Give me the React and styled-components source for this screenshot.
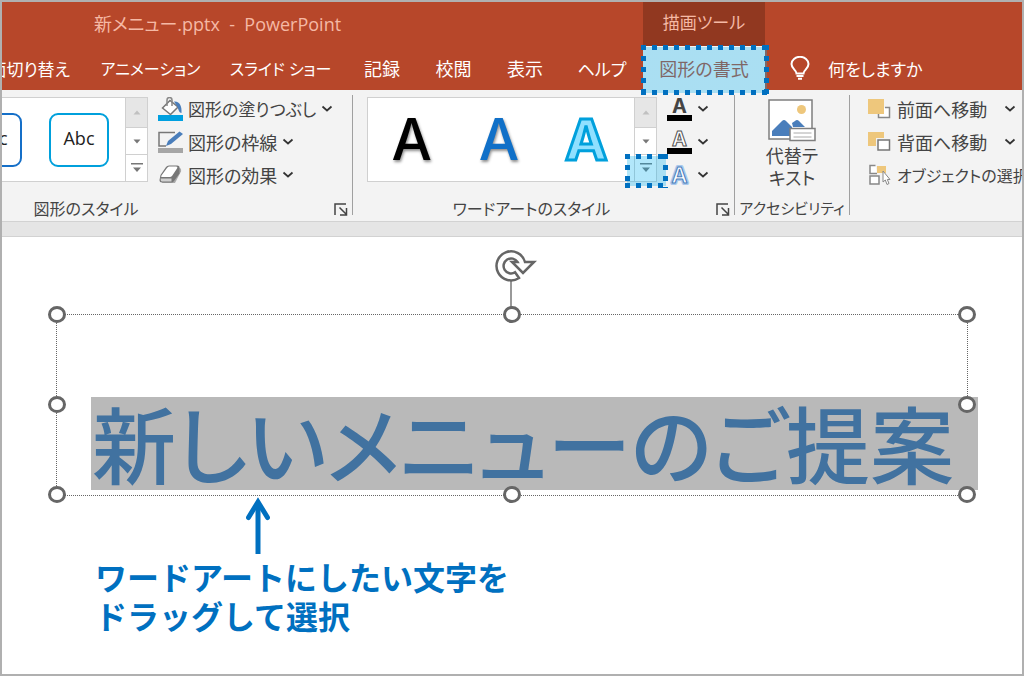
import React from 'react';
import styled, { createGlobalStyle, css } from 'styled-components';

const GlobalStyle = createGlobalStyle`
  * {
    box-sizing: border-box;
  }

  body {
    margin: 0;
    background-color: white;
    font-family: 'Open Sans', 'Noto Sans CJK JP', sans-serif;
    font-size: 18px;
    color: #444444;
  }

  button {
    margin: 0;
    padding: 0;
    border: none;
    background: none;
    font: inherit;
    color: inherit;
    cursor: pointer;
  }
`;

const Frame = styled.div`
  display: flex;
  flex-direction: column;
  min-height: 100vh;
  border: 2px solid #b0b0b0;
  overflow: hidden;
`;

/* Blue marching squares over a translucent fill */
const highlight = css`
  content: '';
  position: absolute;
  z-index: 2;
  pointer-events: none;
  background:
    repeating-linear-gradient(90deg, #0070c0 0 5px, transparent 5px 11px) top / 100% 5px no-repeat,
    repeating-linear-gradient(90deg, #0070c0 0 5px, transparent 5px 11px) bottom / 100% 5px no-repeat,
    repeating-linear-gradient(#0070c0 0 5px, transparent 5px 11px) left / 5px 100% no-repeat,
    repeating-linear-gradient(#0070c0 0 5px, transparent 5px 11px) right / 5px 100% no-repeat,
    linear-gradient(rgba(0, 176, 240, 0.3), rgba(0, 176, 240, 0.3)) center / calc(100% - 4px) calc(100% - 4px) no-repeat;
`;

const Header = styled.header`
  background-color: #b7472a;
  color: white;
  font-feature-settings: 'palt';
  white-space: nowrap;
`;

const TitleBar = styled.div`
  display: flex;
  height: 44px;
  line-height: 44px;
  color: #f5b9a5;
`;

const FileName = styled.div`
  flex: 0 0 641px;
  padding-left: 92px;
  white-space: pre;
`;

const ContextTitle = styled.div`
  flex: 0 0 122px;
  text-align: center;
  background-color: #913820;
  font-size: 17px;
  line-height: 42px;
`;

const TabBar = styled.nav`
  display: flex;
  height: 44px;
`;

const Tab = styled.button`
  flex: 0 0 ${(props) => props.$width}px;
  display: flex;
  justify-content: ${(props) => (props.$cut ? 'flex-end' : 'center')};
  align-items: center;
  padding-right: ${(props) => (props.$cut ? 16 : 0)}px;
  overflow: ${(props) => (props.$cut ? 'hidden' : 'visible')};
  font-size: ${(props) => props.$size || 18}px;
`;

const ActiveTab = styled(Tab)`
  position: relative;
  background-color: #f3f3f3;
  color: #b7472a;

  &::after {
    ${highlight}
    inset: -1px -4px -5px -2px;
  }
`;

const TellMe = styled.button`
  display: flex;
  align-items: center;
  gap: 18px;
  margin-left: 25px;
  font-size: 17px;
`;

const Ribbon = styled.div`
  display: flex;
  height: 131px;
  background-color: #f3f3f3;
  font-feature-settings: 'palt';
  white-space: nowrap;
`;

const Group = styled.section`
  flex: ${(props) => (props.$width ? `0 0 ${props.$width}px` : '1 0 0')};
  min-width: 0;
  display: flex;
  flex-direction: column;
  padding-top: 2px;
`;

const Divider = styled.div`
  flex: 0 0 1px;
  margin: 5px 0 6px;
  background-color: #a0a0a0;
`;

const GroupBody = styled.div`
  display: flex;
  height: 101px;
  padding-left: ${(props) => props.$indent || 0}px;
`;

const GroupFooter = styled.div`
  display: flex;
  align-items: center;
  height: 28px;
  padding: 4px 4px 0 0;
`;

const GroupLabel = styled.h2`
  flex: 1;
  margin: 0;
  padding: 0 ${(props) => props.$shift || 0}px 3px 4px;
  font-size: ${(props) => props.$size || 16}px;
  font-weight: 400;
  text-align: center;
`;

const Gallery = styled.div`
  display: flex;
  height: 85px;
  margin-top: 5px;
  border: 1px solid #d0d0d0;
  border-left-width: ${(props) => (props.$cut ? 0 : 1)}px;
  background-color: white;
`;

const Samples = styled.div`
  flex: 0 0 ${(props) => props.$width}px;
  display: flex;
  align-items: center;
  justify-content: ${(props) => (props.$end ? 'flex-end' : 'space-around')};
  gap: ${(props) => (props.$end ? 27 : 0)}px;
  padding-right: ${(props) => (props.$end ? 16 : 4)}px;
  overflow: hidden;
`;

const ShapeSample = styled.button`
  flex: 0 0 60px;
  height: 54px;
  padding-bottom: 4px;
  border: 2px solid ${(props) => props.$color};
  border-radius: 9px;
  color: #222222;
`;

const LetterSample = styled.button`
  width: 87px;
  font-family: Inter, sans-serif;
  font-size: 57px;
  font-weight: 500;
  line-height: 80px;
  color: ${(props) => props.$color};
  text-shadow: 1px 2px 3px rgba(0, 0, 0, 0.45);
`;

const OutlineLetter = styled(LetterSample)`
  font-weight: 700;
  text-shadow: none;
  -webkit-text-stroke: 3px #00a0dc;
`;

const Scroller = styled.div`
  flex: 0 0 22px;
  display: flex;
  flex-direction: column;
  border-left: 1px solid #d0d0d0;
`;

const ScrollButton = styled.button`
  position: relative;
  flex: 1;
  display: flex;
  align-items: center;
  justify-content: center;
  background-color: white;
  color: #777777;

  &:disabled {
    flex: 0 0 29px;
    background-color: #e6e6e6;
    color: #c0c0c0;
  }

  & + & {
    border-top: 1px solid #d0d0d0;
  }

  &::after {
    ${(props) => props.$marked && highlight}
    inset: -1px -12px -7px -10px;
  }
`;

const Commands = styled.div`
  flex: 1;
  min-width: 0;
  display: flex;
  flex-direction: column;
  padding-left: ${(props) => props.$indent}px;
`;

const Command = styled.button`
  flex: 0 0 33px;
  display: flex;
  align-items: center;
  gap: 5px;
  font-size: ${(props) => props.$size || 18}px;
  text-align: left;

  & > svg {
    flex: none;
  }
`;

const WideLabel = styled.span`
  flex: 0 0 102px;
`;

const BigCommand = styled.button`
  flex: 1;
  display: flex;
  flex-direction: column;
  align-items: center;
  gap: 3px;
  padding-top: 7px;
  line-height: 22px;
`;

const Ruler = styled.div`
  height: 16px;
  background-color: #e5e5e5;
  border: 1px solid #d2d2d2;
  border-width: 1px 0;
`;

const Slide = styled.main`
  flex: 1;
  padding: 77px 54px 0;
`;

const TextBox = styled.div`
  position: relative;
  height: 182px;
  padding: 82px 0 0 34px;
  border: 1px dotted #666666;
`;

const SlideTitle = styled.h1`
  width: calc(100% + 11px);
  margin: 0;
  padding: 0 0 4px 1px;
  background-color: #b9b9b9;
  color: #4172a0;
  font-family: 'Noto Sans CJK JP', sans-serif;
  font-size: 84px;
  font-weight: 500;
  font-feature-settings: 'palt';
  line-height: 89px;
  white-space: nowrap;
`;

const Handle = styled.span`
  position: absolute;
  left: ${(props) => props.$x};
  top: ${(props) => props.$y};
  width: 18px;
  height: 17px;
  margin: -9px 0 0 -9px;
  border: 3px solid #666666;
  border-radius: 50%;
  background-color: white;
`;

const Rotator = styled.svg`
  position: absolute;
  left: 50%;
  top: -68px;
  margin-left: -19px;
`;

const Note = styled.div`
  padding: 1px 0 0 39px;
  color: #0070c0;
`;

const NoteArrow = styled.svg`
  display: block;
  margin-left: 151px;
`;

const NoteText = styled.p`
  margin: 3px 0 0;
  font-family: 'Noto Sans CJK JP', sans-serif;
  font-size: 32px;
  font-weight: 700;
  line-height: 39px;
`;

const ChevronIcon = () => (
  <svg width="12" height="8" viewBox="0 0 12 8" fill="none" stroke="#333" strokeWidth="1.700">
    <path d="M1.500 1.500 6 5.500l4.500-4" />
  </svg>
);

const BulbIcon = () => (
  <svg width="20" height="24" viewBox="0 0 20 24" fill="none" stroke="white" strokeWidth="2">
    <path d="M6.500 17.500c0-3.500-5-4.500-5-9.500a8.500 7.200 0 0 1 17 0c0 5-5 6-5 9.500z" />
    <path d="M6.500 20h7M8 22.800h4" />
  </svg>
);

const ArrowUp = () => (
  <svg width="8" height="5" viewBox="0 0 8 5" fill="currentColor">
    <path d="M0.500 4.500 4 0.500l3.500 4z" />
  </svg>
);

const ArrowDown = () => (
  <svg width="8" height="5" viewBox="0 0 8 5" fill="currentColor">
    <path d="M0.500 0.500h7L4 4.500z" />
  </svg>
);

const ArrowMore = () => (
  <svg width="12" height="10" viewBox="0 0 12 10" fill="currentColor">
    <path d="M0 0h12v1.500H0zM2 4.500h8L6 9z" />
  </svg>
);

const LauncherIcon = () => (
  <svg width="14" height="13" viewBox="0 0 14 13" fill="none" stroke="#444" strokeWidth="1.500">
    <path d="M1 12V1h11M5.500 4.500l6.500 6.500M12.500 5v7H6" />
  </svg>
);

const FillIcon = () => (
  <svg width="25" height="24" viewBox="0 0 25 24" fill="none">
    <path d="M0 18h25v6H0z" fill="#00a0e0" />
    <path d="M4.500 11 12 3.500l8 6.500-7.500 7.500z" fill="white" stroke="#777" strokeWidth="1.500" />
    <path d="M9 9V3a2.500 2.500 0 0 1 5 0v6" stroke="#888" strokeWidth="1.500" />
    <path d="M16 4.500c6-.5 8 5 7.500 11.500-2 0-3-3-4-6z" fill="#4a7ebb" />
  </svg>
);

const OutlineIcon = () => (
  <svg width="25" height="24" viewBox="0 0 25 24" fill="none">
    <path d="M0 18h25v5H0z" fill="#a6a6a6" />
    <path d="M17 2.500H1V16h7" stroke="#777" strokeWidth="1.500" />
    <path d="m8 16 2-5L21.500 1.500 25 4 13 14z" fill="#4a7ebb" />
  </svg>
);

const EffectIcon = () => (
  <svg width="25" height="22" viewBox="0 0 25 22" strokeLinejoin="round">
    <path d="M9 4h12.500q2 0 1.500 3.500l-6 11.500H4z" fill="#aaa" />
    <path d="m2.500 11 5.500-8q1-1.500 3-1.500h8q3 0 2.500 3v5L16 17q-1 1.500-3 1.500H4q-2.500 0-2.500-2.500z" fill="#777" />
    <path d="m3.500 11.500 5.500-7.500q1-1.500 2-1.500h7q2 0 1 2l-5 7.500q-1 1-2 1H4.500q-2 0-1-1.500z" fill="white" />
    <path d="M2.500 14.500h11v3H4q-1.500-.5-1.500-3z" fill="#d0d0d0" />
  </svg>
);

const glyph = {
  fontFamily: 'Inter, sans-serif',
  textAnchor: 'middle',
};

const TextFillIcon = () => (
  <svg width="25" height="26" viewBox="0 0 25 26">
    <text x="12.500" y="17" fontSize="20" fontWeight="700" fill="#444" {...glyph}>A</text>
    <path d="M0 19h25v6H0z" />
  </svg>
);

const TextOutlineIcon = () => (
  <svg width="25" height="26" viewBox="0 0 25 26">
    <text x="12.500" y="17" fontSize="20" fontWeight="700" fill="white" stroke="#555" {...glyph}>A</text>
    <path d="M0 19h25v6H0z" />
  </svg>
);

const TextEffectIcon = () => (
  <svg width="25" height="26" viewBox="0 0 25 26">
    <g strokeLinejoin="round" {...glyph}>
      <text x="12.500" y="21" fontSize="22" fontWeight="600" fill="none" stroke="#a9c8ec" strokeWidth="4">A</text>
      <text x="12.500" y="21" fontSize="22" fontWeight="600" fill="white" stroke="#4a7ebb" strokeWidth="1">A</text>
    </g>
  </svg>
);

const AltTextIcon = () => (
  <svg width="48" height="43" viewBox="0 0 48 43" fill="white">
    <path d="M1 1h43v39H1z" stroke="#7f7f7f" strokeWidth="1.500" />
    <circle cx="33.500" cy="10.500" r="4.500" fill="#eec77c" />
    <path d="M4 37v-5l10-10q2-2 4 0l4 4 2 2v9z" fill="#4a7ebb" />
    <path d="m24 24 3-2q2-2 4 0l6 6H25z" fill="#4a7ebb" />
    <path d="M22 29.500h25v12H22z" stroke="#7f7f7f" strokeWidth="1.500" />
    <path d="M25.500 34h18M25.500 38h18" stroke="#aaa" />
  </svg>
);

const ForwardIcon = () => (
  <svg width="24" height="22" viewBox="0 0 24 22" fill="none">
    <path d="M17 9.500h4.500v10h-11V16" fill="white" stroke="#888" strokeWidth="1.500" />
    <path d="M0 1h16v15H0z" fill="#eec77c" />
  </svg>
);

const BackwardIcon = () => (
  <svg width="24" height="22" viewBox="0 0 24 22">
    <path d="M0 1h16v14H0z" fill="#eec77c" />
    <path d="M8 7h15v13H8z" fill="#f3f3f3" />
    <path d="M10 9h11.500v10H10z" fill="white" stroke="#777" strokeWidth="1.500" />
  </svg>
);

const SelectionIcon = () => (
  <svg width="24" height="22" viewBox="0 0 24 22" fill="white" stroke="#888" strokeWidth="1.500">
    <path d="M9 2h9v7H9z" fill="#eec77c" stroke="none" />
    <path d="M7.500 1.500H2v8h7M2 12h9v8H2z" />
    <path d="M15 7v11l2.300-2 1.700 4.500 2-1-1.700-4H22z" strokeWidth="1" />
  </svg>
);

const tabs = [
  { label: '画面切り替え', width: 84, size: 17, cut: true },
  { label: 'アニメーション', width: 129, size: 16 },
  { label: 'スライド ショー', width: 131, size: 16 },
  { label: '記録', width: 72 },
  { label: '校閲', width: 71 },
  { label: '表示', width: 72 },
  { label: 'ヘルプ', width: 82, size: 17 },
];

const handles = [
  ['0%', '0%'],
  ['50%', '0%'],
  ['100%', '0%'],
  ['0%', '50%'],
  ['100%', '50%'],
  ['0%', '100%'],
  ['50%', '100%'],
  ['100%', '100%'],
];

function GalleryScroller({ marked }) {
  return (
    <Scroller>
      <ScrollButton disabled aria-label="上へ">
        <ArrowUp />
      </ScrollButton>
      <ScrollButton aria-label="下へ">
        <ArrowDown />
      </ScrollButton>
      <ScrollButton aria-label="その他" $marked={marked}>
        <ArrowMore />
      </ScrollButton>
    </Scroller>
  );
}

function App() {
  return (
    <>
      <GlobalStyle />
      <Frame>
        <Header>
          <TitleBar>
            <FileName>{'新メニュー.pptx  -  PowerPoint'}</FileName>
            <ContextTitle>描画ツール</ContextTitle>
          </TitleBar>
          <TabBar>
            {tabs.map((tab) => (
              <Tab key={tab.label} $width={tab.width} $size={tab.size} $cut={tab.cut}>
                {tab.label}
              </Tab>
            ))}
            <ActiveTab $width={122}>図形の書式</ActiveTab>
            <TellMe>
              <BulbIcon />
              何をしますか
            </TellMe>
          </TabBar>
        </Header>

        <Ribbon>
          <Group $width={350}>
            <GroupBody>
              <Gallery $cut>
                <Samples $width={123} $end>
                  <ShapeSample $color="#156fc8">Abc</ShapeSample>
                  <ShapeSample $color="#00a0dc">Abc</ShapeSample>
                </Samples>
                <GalleryScroller />
              </Gallery>
              <Commands $indent={10}>
                <Command $size={17}>
                  <FillIcon />
                  図形の塗りつぶし
                  <ChevronIcon />
                </Command>
                <Command>
                  <OutlineIcon />
                  図形の枠線
                  <ChevronIcon />
                </Command>
                <Command>
                  <EffectIcon />
                  図形の効果
                  <ChevronIcon />
                </Command>
              </Commands>
            </GroupBody>
            <GroupFooter>
              <GroupLabel $shift={168}>図形のスタイル</GroupLabel>
              <button aria-label="図形の書式設定">
                <LauncherIcon />
              </button>
            </GroupFooter>
          </Group>
          <Divider />
          <Group $width={381}>
            <GroupBody $indent={14}>
              <Gallery>
                <Samples $width={266}>
                  <LetterSample $color="black">A</LetterSample>
                  <LetterSample $color="#1070c8">A</LetterSample>
                  <OutlineLetter $color="#8fe0ff">A</OutlineLetter>
                </Samples>
                <GalleryScroller marked />
              </Gallery>
              <Commands $indent={10}>
                <Command aria-label="文字の塗りつぶし">
                  <TextFillIcon />
                  <ChevronIcon />
                </Command>
                <Command aria-label="文字の輪郭">
                  <TextOutlineIcon />
                  <ChevronIcon />
                </Command>
                <Command aria-label="文字の効果">
                  <TextEffectIcon />
                  <ChevronIcon />
                </Command>
              </Commands>
            </GroupBody>
            <GroupFooter>
              <GroupLabel $shift={10}>ワードアートのスタイル</GroupLabel>
              <button aria-label="テキストの書式設定">
                <LauncherIcon />
              </button>
            </GroupFooter>
          </Group>
          <Divider />
          <Group $width={114}>
            <GroupBody>
              <BigCommand>
                <AltTextIcon />
                <span>
                  代替テ
                  <br />
                  キスト
                </span>
              </BigCommand>
            </GroupBody>
            <GroupFooter>
              <GroupLabel $size={15}>アクセシビリティ</GroupLabel>
            </GroupFooter>
          </Group>
          <Divider />
          <Group>
            <GroupBody>
              <Commands $indent={18}>
                <Command>
                  <ForwardIcon />
                  <WideLabel>前面へ移動</WideLabel>
                  <ChevronIcon />
                </Command>
                <Command>
                  <BackwardIcon />
                  <WideLabel>背面へ移動</WideLabel>
                  <ChevronIcon />
                </Command>
                <Command $size={16}>
                  <SelectionIcon />
                  オブジェクトの選択
                </Command>
              </Commands>
            </GroupBody>
          </Group>
        </Ribbon>
        <Ruler />

        <Slide>
          <TextBox>
            <SlideTitle>新しいメニューのご提案</SlideTitle>
            <Rotator width="44" height="68" viewBox="0 0 44 68" fill="none">
              <path d="M18 33v35" stroke="#777" strokeWidth="1.500" />
              <path
                d="M26 31A14.500 14.500 0 1 1 32 15H41L30 26 19 15H24.500A7.500 7.500 0 1 0 22 25.300z"
                fill="white"
                stroke="#666"
                strokeWidth="2.500"
              />
            </Rotator>
            {handles.map(([x, y]) => (
              <Handle key={x + y} $x={x} $y={y} />
            ))}
          </TextBox>
          <Note>
            <NoteArrow width="24" height="57" viewBox="0 0 24 57" fill="none" stroke="currentColor" strokeWidth="5">
              <path d="M12 5v52" />
              <path d="M2.500 20.500 12 5l9.500 15.500" strokeLinecap="round" />
            </NoteArrow>
            <NoteText>
              ワードアートにしたい文字を
              <br />
              ドラッグして選択
            </NoteText>
          </Note>
        </Slide>
      </Frame>
    </>
  );
}

export default App;
